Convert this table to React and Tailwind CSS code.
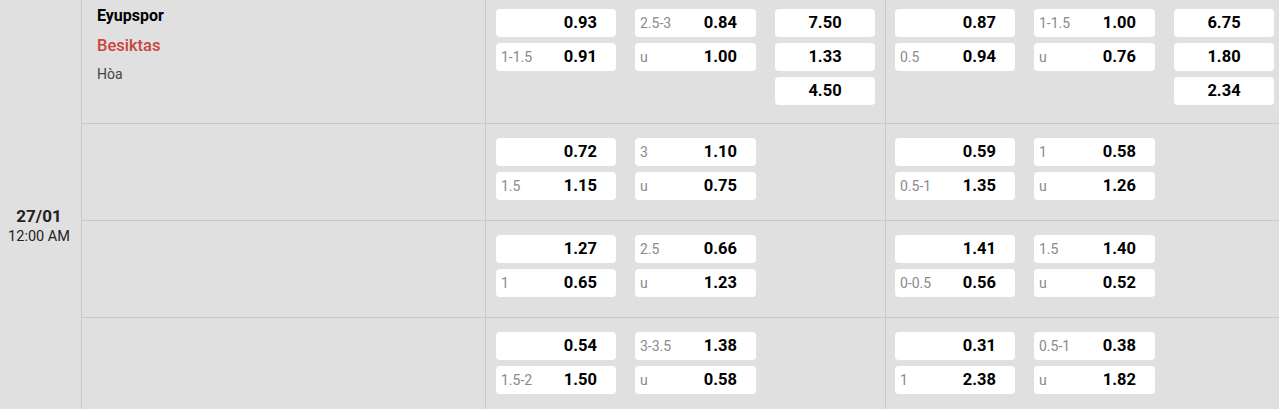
import React from 'react';

const rows = [
  {
    team: true,
    a: [
      [['', '0.93'], ['1-1.5', '0.91']],
      [['2.5-3', '0.84'], ['u', '1.00']],
      ['7.50', '1.33', '4.50'],
    ],
    b: [
      [['', '0.87'], ['0.5', '0.94']],
      [['1-1.5', '1.00'], ['u', '0.76']],
      ['6.75', '1.80', '2.34'],
    ],
  },
  {
    a: [[['', '0.72'], ['1.5', '1.15']], [['3', '1.10'], ['u', '0.75']]],
    b: [[['', '0.59'], ['0.5-1', '1.35']], [['1', '0.58'], ['u', '1.26']]],
  },
  {
    a: [[['', '1.27'], ['1', '0.65']], [['2.5', '0.66'], ['u', '1.23']]],
    b: [[['', '1.41'], ['0-0.5', '0.56']], [['1.5', '1.40'], ['u', '0.52']]],
  },
  {
    a: [[['', '0.54'], ['1.5-2', '1.50']], [['3-3.5', '1.38'], ['u', '0.58']]],
    b: [[['', '0.31'], ['1', '2.38']], [['0.5-1', '0.38'], ['u', '1.82']]],
  },
];

const OddBox = ({ label, value, wide }) => (
  <div
    className={`${wide ? 'w-[121px]' : 'w-[120px]'} h-[28px] bg-white rounded-[4px] flex items-center justify-between pl-[5px] pr-[19px] pt-[1px]`}
  >
    <span className="text-[14px] text-[#8a8a8a]">{label}</span>
    <span className="text-[16.5px] font-bold text-black">{value}</span>
  </div>
);

const Section = ({ cols, pad, top }) => (
  <div className={`flex items-start gap-[19px] ${pad} ${top}`}>
    <div className="flex flex-col gap-[6px]">
      {cols[0].map(([l, v], i) => (
        <OddBox key={i} label={l} value={v} />
      ))}
    </div>
    <div className="flex flex-col gap-[6px]">
      {cols[1].map(([l, v], i) => (
        <OddBox key={i} label={l} value={v} wide />
      ))}
    </div>
    {cols[2] && (
      <div className="flex flex-col gap-[6px]">
        {cols[2].map((v, i) => (
          <div
            key={i}
            className="w-[100px] h-[28px] bg-white rounded-[4px] flex items-center justify-center pt-[1px] text-[16.5px] font-bold text-black"
          >
            {v}
          </div>
        ))}
      </div>
    )}
  </div>
);

export default function App() {
  return (
    <div
      className="w-[1279px] h-[409px] overflow-hidden bg-[#e0e0e0] flex"
      style={{ fontFamily: 'Roboto, "Noto Sans", sans-serif' }}
    >
      <div className="w-[82px] shrink-0 border-r border-[#c9c9c9] pt-[206px] pr-[3px] text-center text-[#222]">
        <div className="text-[17px] font-bold leading-[20px]">27/01</div>
        <div className="text-[14.5px] leading-[20px] mt-[1px]">12:00 AM</div>
      </div>
      <div className="flex-1 flex flex-col">
        {rows.map((r, i) => (
          <div
            key={i}
            className={`flex shrink-0 border-b border-[#c9c9c9] ${i === 0 ? 'h-[124px]' : 'h-[97px]'}`}
          >
            <div className="w-[404px] shrink-0 border-r border-[#c9c9c9] pl-[15px] pt-[6px]">
              {r.team && (
                <div className="flex flex-col">
                  <span className="text-[16px] font-bold leading-[20px] text-black">Eyupspor</span>
                  <span className="text-[16.5px] font-medium leading-[20px] mt-[10px] text-[#c9453e]">Besiktas</span>
                  <span className="text-[14px] leading-[20px] mt-[8px] text-[#444]">Hòa</span>
                </div>
              )}
            </div>
            <div className="w-[400px] shrink-0 border-r border-[#c9c9c9]">
              <Section cols={r.a} pad="pl-[10px]" top={i === 0 ? 'pt-[9px]' : 'pt-[14px]'} />
            </div>
            <div className="flex-1">
              <Section cols={r.b} pad="pl-[9px]" top={i === 0 ? 'pt-[9px]' : 'pt-[14px]'} />
            </div>
          </div>
        ))}
      </div>
    </div>
  );
}
